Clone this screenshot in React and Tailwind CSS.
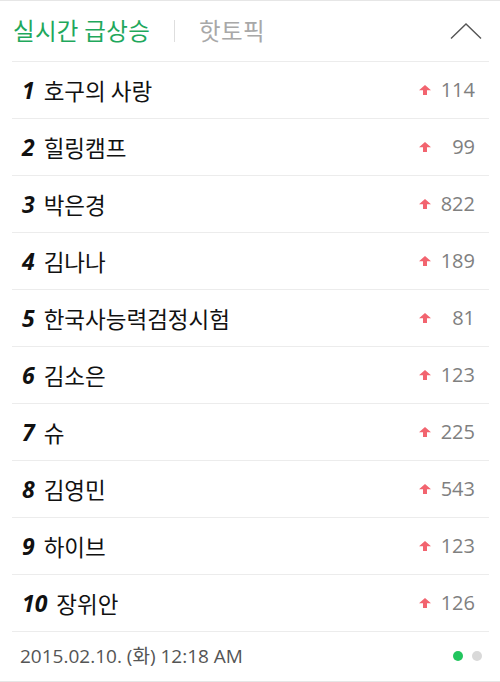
import React from "react";

const rows = [
  ["1", "호구의 사랑", "114"],
  ["2", "힐링캠프", "99"],
  ["3", "박은경", "822"],
  ["4", "김나나", "189"],
  ["5", "한국사능력검정시험", "81"],
  ["6", "김소은", "123"],
  ["7", "슈", "225"],
  ["8", "김영민", "543"],
  ["9", "하이브", "123"],
  ["10", "장위안", "126"],
];

function UpArrow() {
  return (
    <svg width="12" height="10" viewBox="0 0 12 10">
      <path d="M6 0 L12 5.2 L8 5.2 L8 10 L4 10 L4 5.2 L0 5.2 Z" fill="#f2646f" />
    </svg>
  );
}

const kr = { fontFamily: '"Noto Sans CJK KR", sans-serif' };

export default function App() {
  return (
    <div
      className="w-[500px] h-[682px] bg-white border-t border-b border-[#e6e6e6] overflow-hidden"
      style={{ fontFamily: '"Open Sans", "Noto Sans", "Noto Sans CJK KR", sans-serif' }}
    >
      <div className="h-[60px] flex items-center pl-[13px] pr-[18px]">
        <span className="text-[23.5px] text-[#1fa85c] tracking-[0.3px]" style={kr}>실시간 급상승</span>
        <span className="mx-[24px] w-px h-[22px] bg-[#dedede]" />
        <span className="text-[23.5px] text-[#a8a8a8] tracking-[0.3px]" style={kr}>핫토픽</span>
        <div className="ml-auto">
          <svg width="32" height="18" viewBox="0 0 32 18">
            <path d="M1 16.5 L16 2 L31 16.5" fill="none" stroke="#555" strokeWidth="1.4" />
          </svg>
        </div>
      </div>
      <div className="ml-[12px] mr-[11px]">
        {rows.map(([r, name, n]) => (
          <div key={r} className="h-[57px] border-t border-[#ececec] flex items-center pl-[10px] pr-[14px]">
            <span className="text-[23px] font-bold italic text-[#111] leading-none">{r}</span>
            <span className="ml-[9px] text-[22.5px] text-[#111] leading-none" style={kr}>{name}</span>
            <div className="ml-auto flex items-center">
              <UpArrow />
              <span className="w-[44px] text-right text-[20px] text-[#808080] leading-none">{n}</span>
            </div>
          </div>
        ))}
        <div className="border-t border-[#ececec]" />
      </div>
      <div className="h-[48px] flex items-center pl-[20px] pr-[18px]">
        <span className="text-[19px] text-[#555]">2015.02.10. (화) 12:18 AM</span>
        <div className="ml-auto flex items-center gap-[9px]">
          <span className="w-[10px] h-[10px] rounded-full bg-[#22c55e]" />
          <span className="w-[10px] h-[10px] rounded-full bg-[#d9d9d9]" />
        </div>
      </div>
    </div>
  );
}
